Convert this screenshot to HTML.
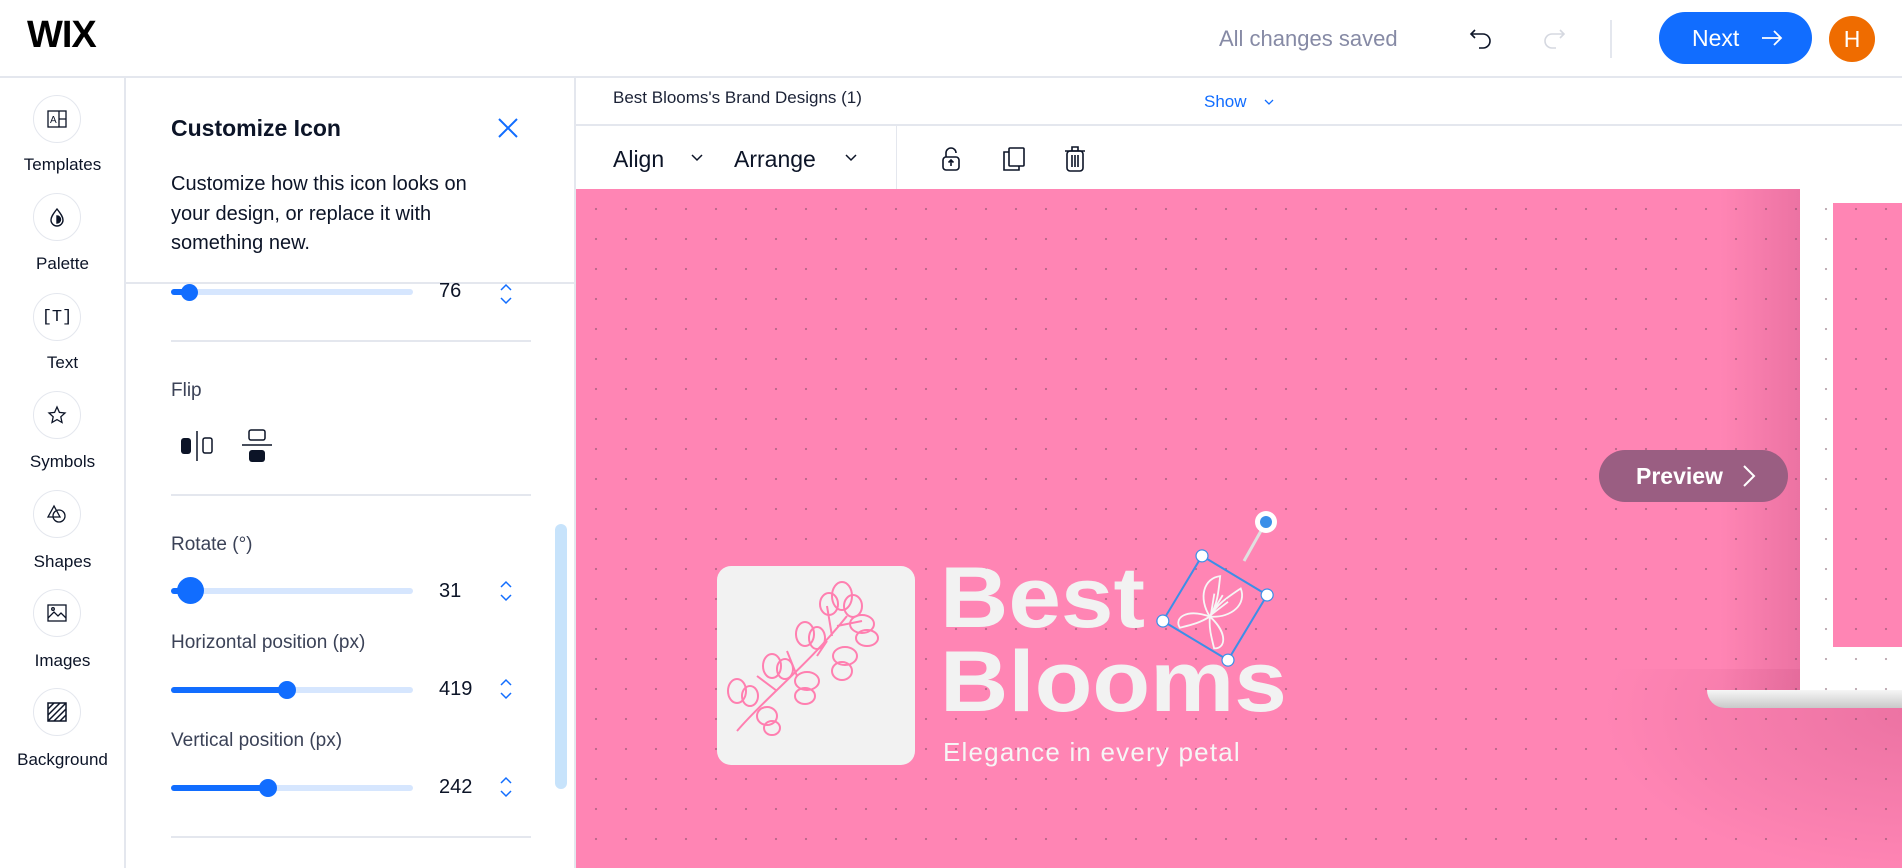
<!DOCTYPE html>
<html><head><meta charset="utf-8"><style>
*{margin:0;padding:0;box-sizing:border-box}
body{width:1902px;height:868px;overflow:hidden;background:#fff;font-family:"Liberation Sans",sans-serif;position:relative;color:#0c1427}
.a{position:absolute}
.rc{position:absolute;left:33px;width:48px;height:48px;border-radius:50%;border:1px solid #e4e7ee;display:flex;align-items:center;justify-content:center}
.rl{position:absolute;left:0;width:125px;text-align:center;font-size:17px;color:#0c1427}
.lbl{position:absolute;left:171px;font-size:19px;color:#3b4257}
.trk{position:absolute;left:171px;width:242px;height:6px;border-radius:3px;background:#d6e6fe}
.fill{position:absolute;left:0;top:0;height:6px;border-radius:3px;background:#116dff}
.th{position:absolute;border-radius:50%;background:#116dff}
.val{position:absolute;left:439px;font-size:20px;color:#0c1427}
.hr{position:absolute;left:171px;width:360px;height:2px;background:#e4e7ee}
.big{position:absolute;left:364px;font-size:86px;font-weight:bold;color:#f2f2f2;line-height:86px;transform:scaleX(1.1);transform-origin:0 0}
</style></head><body>
<div class="a" style="left:27px;top:14px;font-size:38px;font-weight:bold;letter-spacing:-1px;color:#000">WIX</div>
<div class="a" style="left:1219px;top:26px;font-size:22px;color:#868aa5">All changes saved</div>
<svg class="a" style="left:1467px;top:24px" width="30" height="30" viewBox="0 0 30 30" fill="none" stroke="#0c1427" stroke-width="1.6"><path d="M8 6 L4 10 L8 14"/><path d="M4 10 H16 a7 7 0 0 1 0 14 H12"/></svg>
<svg class="a" style="left:1538px;top:24px" width="30" height="30" viewBox="0 0 30 30" fill="none" stroke="#d5d8e0" stroke-width="1.6"><path d="M22 6 L26 10 L22 14"/><path d="M26 10 H14 a7 7 0 0 0 0 14 H18"/></svg>
<div class="a" style="left:1610px;top:20px;width:2px;height:38px;background:#e4e7ee"></div>
<div class="a" style="left:1659px;top:12px;width:153px;height:52px;border-radius:26px;background:#116dff;color:#fff;font-size:23px;line-height:52px;padding-left:33px">Next</div>
<svg class="a" style="left:1760px;top:28px" width="24" height="20" viewBox="0 0 24 20" fill="none" stroke="#fff" stroke-width="1.8"><path d="M2 10 H21 M14 3 L21 10 L14 17"/></svg>
<div class="a" style="left:1829px;top:16px;width:46px;height:46px;border-radius:50%;background:#ef6c00;color:#fff;font-size:23px;line-height:46px;text-align:center">H</div>
<div class="a" style="left:0;top:76px;width:1902px;height:2px;background:#e4e7ee"></div>
<div class="a" style="left:124px;top:78px;width:2px;height:790px;background:#e4e7ee"></div>
<div class="rc" style="top:95px"><svg width="20" height="18" viewBox="0 0 20 18" fill="none" stroke="#0c1427" stroke-width="1.3"><rect x="1" y="1" width="18" height="16"/><path d="M12 1V17 M12 9H19"/><text x="3" y="13" font-size="10" fill="#0c1427" stroke="none" font-family="Liberation Sans">A</text></svg></div>
<div class="rl" style="top:155px">Templates</div>
<div class="rc" style="top:193px"><svg width="18" height="20" viewBox="0 0 18 20" fill="none" stroke="#0c1427" stroke-width="1.4"><path d="M9 2 C5 7 3 10 3 13 a6 6 0 0 0 12 0 C15 10 13 7 9 2Z"/><path d="M9 9 a3 3 0 0 1 0 7Z" fill="#0c1427"/></svg></div>
<div class="rl" style="top:254px">Palette</div>
<div class="rc" style="top:293px"><span style="font-family:'Liberation Mono';font-size:17px">[T]</span></div>
<div class="rl" style="top:353px">Text</div>
<div class="rc" style="top:391px"><svg width="20" height="20" viewBox="0 0 20 20" fill="none" stroke="#0c1427" stroke-width="1.3"><path d="M10 2 L12.4 7.4 L18 8 L13.8 11.8 L15 17.5 L10 14.6 L5 17.5 L6.2 11.8 L2 8 L7.6 7.4Z"/></svg></div>
<div class="rl" style="top:452px">Symbols</div>
<div class="rc" style="top:490px"><svg width="22" height="20" viewBox="0 0 22 20" fill="none" stroke="#0c1427" stroke-width="1.3"><path d="M8 2 L2 13 H14Z"/><circle cx="13" cy="12" r="6"/></svg></div>
<div class="rl" style="top:552px">Shapes</div>
<div class="rc" style="top:589px"><svg width="20" height="18" viewBox="0 0 20 18" fill="none" stroke="#0c1427" stroke-width="1.3"><rect x="1" y="1" width="18" height="16"/><path d="M1 14 L7 8 L11 12 L14 9 L19 14"/><circle cx="6" cy="5" r="1.3"/></svg></div>
<div class="rl" style="top:651px">Images</div>
<div class="rc" style="top:688px"><svg width="20" height="20" viewBox="0 0 20 20" fill="none" stroke="#0c1427" stroke-width="1.5"><rect x="1" y="1" width="18" height="18"/><path d="M1 7L7 1M1 13L13 1M1 19L19 1M7 19L19 7M13 19L19 13"/></svg></div>
<div class="rl" style="top:750px">Background</div>
<div class="a" style="left:574px;top:78px;width:2px;height:790px;background:#e4e7ee"></div>
<div class="a" style="left:171px;top:115px;font-size:23px;font-weight:bold;color:#0c1427">Customize Icon</div>
<svg class="a" style="left:497px;top:117px" width="22" height="22" viewBox="0 0 22 22" stroke="#116dff" stroke-width="2"><path d="M2 2L20 20M20 2L2 20"/></svg>
<div class="a" style="left:171px;top:170px;font-size:20px;line-height:29.5px;color:#0c1427;width:330px">Customize how this icon looks on your design, or replace it with something new.</div>
<div class="a" style="left:126px;top:282px;width:448px;height:2px;background:#e4e7ee"></div>
<div class="trk" style="top:289px"><div class="fill" style="width:20px"></div></div><div class="th" style="left:181px;top:284px;width:17px;height:17px"></div>
<div class="val" style="top:280px">76</div>
<svg class="a" style="left:499px;top:283px" width="14" height="22" viewBox="0 0 14 22" fill="none" stroke="#116dff" stroke-width="1.5"><path d="M2 7L7 2L12 7M2 15L7 20L12 15"/></svg>
<div class="hr" style="top:340px"></div>
<div class="lbl" style="top:380px">Flip</div>
<svg class="a" style="left:180px;top:428px" width="36" height="34" viewBox="0 0 36 34"><rect x="1" y="10" width="10" height="16" rx="3" fill="#0c1427"/><path d="M17 3V33" stroke="#0c1427" stroke-width="1.5"/><rect x="23" y="10" width="9" height="15" rx="2" fill="none" stroke="#0c1427" stroke-width="1.5"/></svg>
<svg class="a" style="left:241px;top:428px" width="32" height="36" viewBox="0 0 32 36"><rect x="8" y="2" width="16" height="10" rx="2" fill="none" stroke="#0c1427" stroke-width="1.5"/><path d="M1 17H31" stroke="#0c1427" stroke-width="1.5"/><rect x="8" y="22" width="16" height="12" rx="3" fill="#0c1427"/></svg>
<div class="hr" style="top:494px"></div>
<div class="lbl" style="top:534px">Rotate (°)</div>
<div class="trk" style="top:588px"><div class="fill" style="width:20px"></div></div><div class="th" style="left:177px;top:577px;width:27px;height:27px"></div>
<div class="val" style="top:580px">31</div>
<svg class="a" style="left:499px;top:580px" width="14" height="22" viewBox="0 0 14 22" fill="none" stroke="#116dff" stroke-width="1.5"><path d="M2 7L7 2L12 7M2 15L7 20L12 15"/></svg>
<div class="lbl" style="top:632px">Horizontal position (px)</div>
<div class="trk" style="top:687px"><div class="fill" style="width:115px"></div></div><div class="th" style="left:278px;top:681px;width:18px;height:18px"></div>
<div class="val" style="top:678px">419</div>
<svg class="a" style="left:499px;top:678px" width="14" height="22" viewBox="0 0 14 22" fill="none" stroke="#116dff" stroke-width="1.5"><path d="M2 7L7 2L12 7M2 15L7 20L12 15"/></svg>
<div class="lbl" style="top:730px">Vertical position (px)</div>
<div class="trk" style="top:785px"><div class="fill" style="width:97px"></div></div><div class="th" style="left:259px;top:779px;width:18px;height:18px"></div>
<div class="val" style="top:776px">242</div>
<svg class="a" style="left:499px;top:776px" width="14" height="22" viewBox="0 0 14 22" fill="none" stroke="#116dff" stroke-width="1.5"><path d="M2 7L7 2L12 7M2 15L7 20L12 15"/></svg>
<div class="hr" style="top:836px"></div>
<div class="a" style="left:555px;top:524px;width:12px;height:265px;border-radius:6px;background:#c7e3fb"></div>
<div class="a" style="left:613px;top:88px;font-size:17px;color:#1b2236">Best Blooms's Brand Designs (1)</div>
<div class="a" style="left:1204px;top:92px;font-size:17px;color:#116dff">Show</div>
<svg class="a" style="left:1263px;top:98px" width="12" height="8" viewBox="0 0 12 8" fill="none" stroke="#116dff" stroke-width="1.3"><path d="M2 2L6 6L10 2"/></svg>
<div class="a" style="left:576px;top:124px;width:1326px;height:2px;background:#e4e7ee"></div>
<div class="a" style="left:613px;top:146px;font-size:23px;color:#0c1427">Align</div>
<svg class="a" style="left:690px;top:153px" width="14" height="10" viewBox="0 0 14 10" fill="none" stroke="#0c1427" stroke-width="1.5"><path d="M2 2L7 7L12 2"/></svg>
<div class="a" style="left:734px;top:146px;font-size:23px;color:#0c1427">Arrange</div>
<svg class="a" style="left:844px;top:153px" width="14" height="10" viewBox="0 0 14 10" fill="none" stroke="#0c1427" stroke-width="1.5"><path d="M2 2L7 7L12 2"/></svg>
<div class="a" style="left:896px;top:126px;width:1px;height:63px;background:#e4e7ee"></div>
<svg class="a" style="left:940px;top:146px" width="22" height="26" viewBox="0 0 22 26" fill="none" stroke="#0c1427" stroke-width="1.6"><path d="M6 11V7a5 5 0 0 1 10 0"/><rect x="3" y="11" width="16" height="13" rx="3"/><path d="M11 14V20M8.5 16.5L11 14L13.5 16.5"/></svg>
<svg class="a" style="left:1002px;top:146px" width="24" height="26" viewBox="0 0 24 26" fill="none" stroke="#0c1427" stroke-width="1.6"><rect x="7" y="2" width="15" height="18" rx="1"/><path d="M7 6H2V24H17V20"/></svg>
<svg class="a" style="left:1063px;top:145px" width="24" height="28" viewBox="0 0 24 28" fill="none" stroke="#0c1427" stroke-width="1.6"><path d="M2 6H22M9 6V2H15V6"/><rect x="4" y="6" width="16" height="20" rx="3"/><path d="M9 10V22M12 10V22M15 10V22"/></svg>
<div class="a" style="left:576px;top:189px;width:1326px;height:679px;background:#ff85b4;overflow:hidden">
  <div class="a" style="left:1144px;top:0;width:80px;height:510px;background:linear-gradient(90deg,rgba(200,80,130,0),rgba(200,80,130,0.35))"></div>
  <div class="a" style="left:1000px;top:480px;width:450px;height:220px;background:radial-gradient(ellipse at 75% 20%,rgba(200,80,130,0.35),rgba(200,80,130,0) 65%)"></div>
  <div class="a" style="left:1224px;top:-10px;width:110px;height:511px;background:#fff"></div>
  <div class="a" style="left:1257px;top:14px;width:80px;height:444px;background:#ff85b4"></div>
  <div class="a" style="left:1131px;top:501px;width:200px;height:18px;background:linear-gradient(#f6f6f6,#c9c9c9);border-radius:0 0 0 40px"></div>
  <div class="a" style="left:0;top:0;width:1326px;height:679px;background-image:radial-gradient(circle,rgba(110,70,90,0.45) 1px,transparent 1.3px);background-size:30px 30px;background-position:5px 5px"></div>
  <div class="a" style="left:1023px;top:261px;width:189px;height:52px;border-radius:26px;background:#9a5e82;color:#fff;font-size:23px;font-weight:bold;line-height:52px;padding-left:37px">Preview</div>
  <svg class="a" style="left:1165px;top:275px" width="16" height="24" viewBox="0 0 16 24" fill="none" stroke="#fff" stroke-width="2"><path d="M3 2L13 12L3 22"/></svg>
  <div class="a" style="left:141px;top:377px;width:198px;height:199px;border-radius:14px;background:#f2f2f2"></div>
  <svg class="a" style="left:141px;top:377px" width="198" height="199" viewBox="0 0 198 199" fill="none" stroke="#ff7fb0" stroke-width="2">
    <path d="M20 165 C50 130 90 100 130 50"/>
    <path d="M60 125 L40 110 M80 110 L70 85 M100 90 L110 75 M115 70 L110 40 M120 60 L145 55"/>
    <g><ellipse cx="125" cy="30" rx="10" ry="14"/><ellipse cx="112" cy="38" rx="9" ry="11"/><ellipse cx="136" cy="40" rx="9" ry="11"/></g>
    <g><ellipse cx="145" cy="58" rx="12" ry="9"/><ellipse cx="150" cy="72" rx="11" ry="8"/></g>
    <g><ellipse cx="88" cy="68" rx="9" ry="12"/><ellipse cx="100" cy="72" rx="8" ry="11"/></g>
    <g><ellipse cx="128" cy="90" rx="12" ry="9"/><ellipse cx="125" cy="105" rx="10" ry="9"/></g>
    <g><ellipse cx="55" cy="100" rx="9" ry="12"/><ellipse cx="68" cy="103" rx="8" ry="10"/></g>
    <g><ellipse cx="90" cy="115" rx="12" ry="9"/><ellipse cx="88" cy="130" rx="10" ry="8"/></g>
    <g><ellipse cx="20" cy="125" rx="9" ry="12"/><ellipse cx="33" cy="130" rx="8" ry="10"/></g>
    <g><ellipse cx="50" cy="150" rx="10" ry="9"/><ellipse cx="55" cy="162" rx="8" ry="7"/></g>
  </svg>
  <div class="big" style="top:366px">Best</div>
  <div class="big" style="top:450px">Blooms</div>
  <div class="a" style="left:367px;top:548px;font-size:26px;color:#f6f6f6;letter-spacing:1.2px">Elegance in every petal</div>
  <svg class="a" style="left:570px;top:320px" width="140" height="170" viewBox="0 0 140 170" fill="none">
    <line x1="120" y1="13" x2="98" y2="52" stroke="#e0e0e0" stroke-width="3"/>
    <g transform="translate(69,99) rotate(31)">
      <rect x="-38" y="-38" width="76" height="76" stroke="#3b8fe8" stroke-width="2"/>
      <g stroke="#f6f6f6" stroke-width="1.8">
        <path d="M0 10 C-20 0 -25 -20 -12 -30 C-5 -15 0 -5 0 10Z"/>
        <path d="M0 10 C20 0 25 -20 12 -30 C5 -15 0 -5 0 10Z"/>
        <path d="M0 10 C-25 15 -30 30 -20 35 C-10 25 -5 20 0 10Z"/>
        <path d="M0 10 C25 15 30 30 20 35 C10 25 5 20 0 10Z"/>
        <path d="M0 10 V-15 M0 8 L-8 -12 M0 8 L8 -12"/>
      </g>
      <circle cx="-38" cy="-38" r="6" fill="#fff" stroke="#3b8fe8" stroke-width="1.2"/>
      <circle cx="38" cy="-38" r="6" fill="#fff" stroke="#3b8fe8" stroke-width="1.2"/>
      <circle cx="38" cy="38" r="6" fill="#fff" stroke="#3b8fe8" stroke-width="1.2"/>
      <circle cx="-38" cy="38" r="6" fill="#fff" stroke="#3b8fe8" stroke-width="1.2"/>
    </g>
    <circle cx="120" cy="13" r="11" fill="#fff"/>
    <circle cx="120" cy="13" r="6" fill="#3b8fe8"/>
  </svg>
</div>
</body></html>
